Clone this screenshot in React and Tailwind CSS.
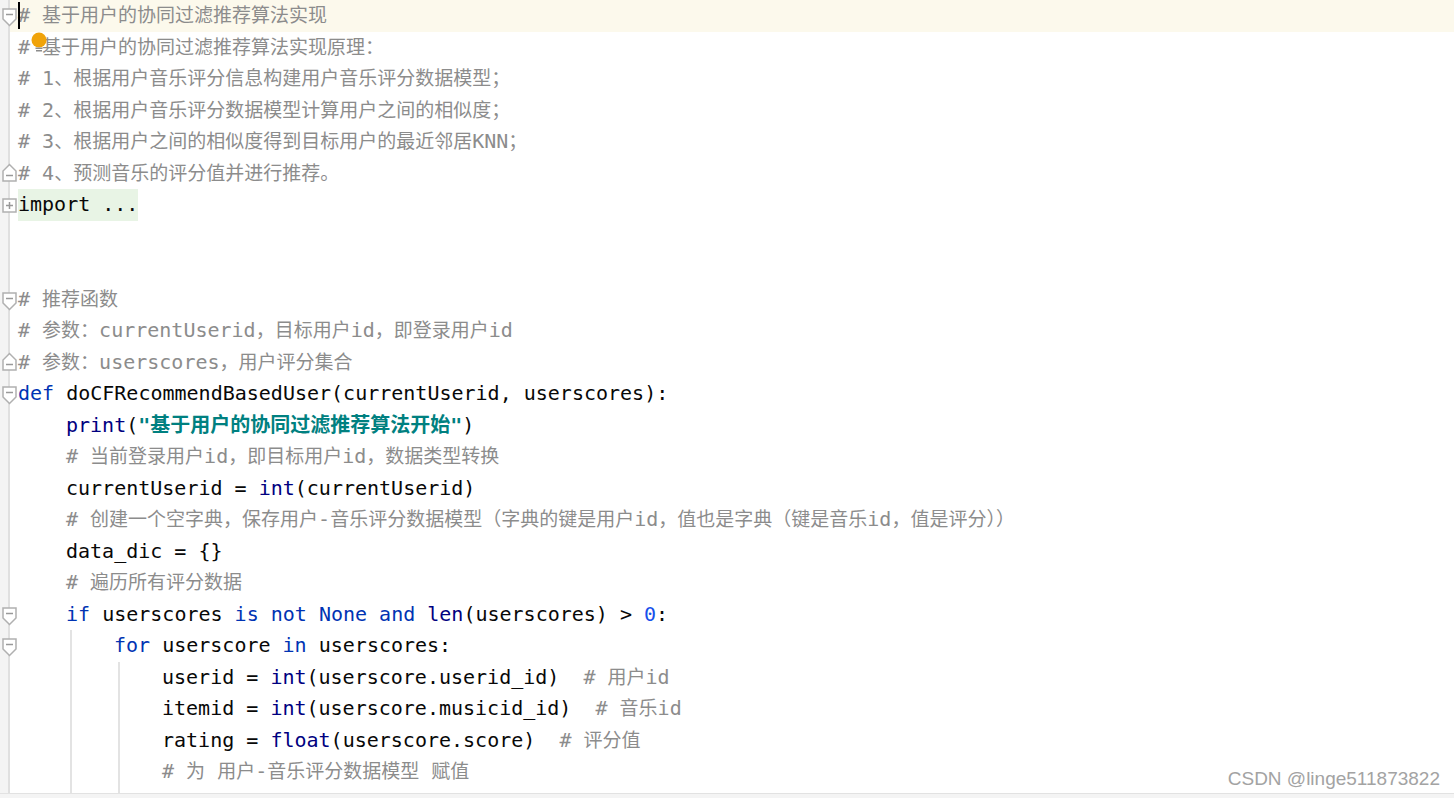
import React from "react";

const COLORS = {
  t: "text-[#080808]",
  c: "text-[#8c8c8c]",
  k: "text-[#0033b3]",
  b: "text-[#000080]",
  s: "text-[#008080] font-bold",
  n: "text-[#1750eb]",
  imp: "text-[#080808] bg-[#e8f4e5]",
};

const CJK = /([\u3000-\u303f\u4e00-\u9fff\uff00-\uffef]+)/;

const LINES = [
  { fold: "start", hl: true, caret: true, t: [["c", "# 基于用户的协同过滤推荐算法实现"]] },
  { bulb: true, t: [["c", "# 基于用户的协同过滤推荐算法实现原理："]] },
  { t: [["c", "# 1、根据用户音乐评分信息构建用户音乐评分数据模型；"]] },
  { t: [["c", "# 2、根据用户音乐评分数据模型计算用户之间的相似度；"]] },
  { t: [["c", "# 3、根据用户之间的相似度得到目标用户的最近邻居KNN；"]] },
  { fold: "end", t: [["c", "# 4、预测音乐的评分值并进行推荐。"]] },
  { fold: "plus", t: [["imp", "import ..."]] },
  { t: [] },
  { t: [] },
  { fold: "start", t: [["c", "# 推荐函数"]] },
  { t: [["c", "# 参数：currentUserid，目标用户id，即登录用户id"]] },
  { fold: "end", t: [["c", "# 参数：userscores，用户评分集合"]] },
  {
    fold: "start",
    t: [
      ["k", "def"],
      ["t", " doCFRecommendBasedUser(currentUserid, userscores):"],
    ],
  },
  {
    ind: 1,
    t: [
      ["b", "print"],
      ["t", "("],
      ["s", "\"基于用户的协同过滤推荐算法开始\""],
      ["t", ")"],
    ],
  },
  { ind: 1, t: [["c", "# 当前登录用户id，即目标用户id，数据类型转换"]] },
  {
    ind: 1,
    t: [
      ["t", "currentUserid = "],
      ["b", "int"],
      ["t", "(currentUserid)"],
    ],
  },
  {
    ind: 1,
    t: [["c", "# 创建一个空字典，保存用户-音乐评分数据模型（字典的键是用户id，值也是字典（键是音乐id，值是评分））"]],
  },
  { ind: 1, t: [["t", "data_dic = {}"]] },
  { ind: 1, t: [["c", "# 遍历所有评分数据"]] },
  {
    ind: 1,
    fold: "start",
    t: [
      ["k", "if"],
      ["t", " userscores "],
      ["k", "is not None and"],
      ["t", " "],
      ["b", "len"],
      ["t", "(userscores) > "],
      ["n", "0"],
      ["t", ":"],
    ],
  },
  {
    ind: 2,
    fold: "start",
    t: [
      ["k", "for"],
      ["t", " userscore "],
      ["k", "in"],
      ["t", " userscores:"],
    ],
  },
  {
    ind: 3,
    t: [
      ["t", "userid = "],
      ["b", "int"],
      ["t", "(userscore.userid_id)  "],
      ["c", "# 用户id"],
    ],
  },
  {
    ind: 3,
    t: [
      ["t", "itemid = "],
      ["b", "int"],
      ["t", "(userscore.musicid_id)  "],
      ["c", "# 音乐id"],
    ],
  },
  {
    ind: 3,
    t: [
      ["t", "rating = "],
      ["b", "float"],
      ["t", "(userscore.score)  "],
      ["c", "# 评分值"],
    ],
  },
  { ind: 3, t: [["c", "# 为 用户-音乐评分数据模型 赋值"]] },
  { ind: 3, t: [] },
];

// comments render their CJK a bit smaller, like the IDE fallback font
const renderText = (type, text) => {
  if (type !== "c") return text;
  return text.split(CJK).map((part, i) =>
    CJK.test(part) ? (
      <span key={i} className="text-[19px]">
        {part}
      </span>
    ) : (
      part
    )
  );
};

const FoldIcon = ({ kind }) => {
  if (kind === "plus") {
    return (
      <svg width="15" height="15" viewBox="0 0 15 15" className="absolute left-[2px] top-[9px] max-w-none">
        <rect x="1" y="1" width="13" height="13" fill="#fff" stroke="#b0b0b0" strokeWidth="1.5" />
        <path d="M4 7.5h7M7.5 4v7" stroke="#999" strokeWidth="1.5" />
      </svg>
    );
  }
  if (kind === "end") {
    return (
      <svg width="15" height="19" viewBox="0 0 15 19" className="absolute left-[2px] top-[5px] max-w-none">
        <path d="M1 18h13v-10l-6.5-6.5l-6.5 6.5z" fill="#fff" stroke="#b0b0b0" strokeWidth="1.5" />
        <path d="M4 12.5h7" stroke="#999" strokeWidth="1.5" />
      </svg>
    );
  }
  return (
    <svg width="15" height="19" viewBox="0 0 15 19" className="absolute left-[2px] top-[8px] max-w-none">
      <path d="M1 1h13v10l-6.5 6.5l-6.5-6.5z" fill="#fff" stroke="#b0b0b0" strokeWidth="1.5" />
      <path d="M4 6.5h7" stroke="#999" strokeWidth="1.5" />
    </svg>
  );
};

const Indent = ({ level }) => {
  const spans = [];
  for (let i = 0; i < level; i++) {
    spans.push(
      i === 0 ? (
        <span key={i} className="inline-block w-[48px] h-[31.5px] align-top" />
      ) : (
        <span
          key={i}
          className="inline-block ml-[4px] w-[44px] h-[31.5px] align-top border-l-2 border-[#e3e3e3]"
        />
      )
    );
  }
  return spans;
};

const CodeLine = ({ line }) => (
  <div className={`relative flex h-[31.5px] shrink-0 ${line.hl ? "bg-[#fcf9ec]" : ""}`}>
    <div className="relative w-[18px] shrink-0 flex">
      <div className="w-[10px] bg-[#f4f4f4] border-r-2 border-[#e0e0e0]" />
      {line.fold && <FoldIcon kind={line.fold} />}
    </div>
    <div className="whitespace-pre leading-[31.5px]">
      <Indent level={line.ind || 0} />
      {line.t.map(([type, text], i) => (
        <span key={i} className={`inline-block ${COLORS[type]}`}>
          {renderText(type, text)}
        </span>
      ))}
    </div>
    {line.caret && <div className="absolute left-[18px] top-[2px] w-[2px] h-[27px] bg-black" />}
    {line.bulb && (
      <svg width="16" height="22" viewBox="0 0 16 22" className="absolute left-[31px] top-[0px]">
        <circle cx="8" cy="8" r="7.5" fill="#f0a30a" />
        <rect x="4.5" y="15.5" width="7" height="1.5" fill="#8c8c8c" />
        <rect x="5" y="18" width="6" height="1.5" fill="#8c8c8c" />
      </svg>
    )}
  </div>
);

export default function App() {
  return (
    <div className="relative w-[1454px] h-[798px] overflow-hidden bg-white flex flex-col font-['DejaVu_Sans_Mono','Noto_Sans_CJK_SC',monospace] text-[20px]">
      <div className="flex-1 flex flex-col overflow-hidden">
        {LINES.map((line, i) => (
          <CodeLine key={i} line={line} />
        ))}
      </div>
      <div className="h-[5px] shrink-0 bg-[#f4f4f4] border-t border-[#e2e2e2]" />
      <div className="absolute right-[14px] bottom-[10px] leading-none text-[19px] text-[#a3a3a3] font-['Liberation_Sans',sans-serif]">
        CSDN @linge511873822
      </div>
    </div>
  );
}
